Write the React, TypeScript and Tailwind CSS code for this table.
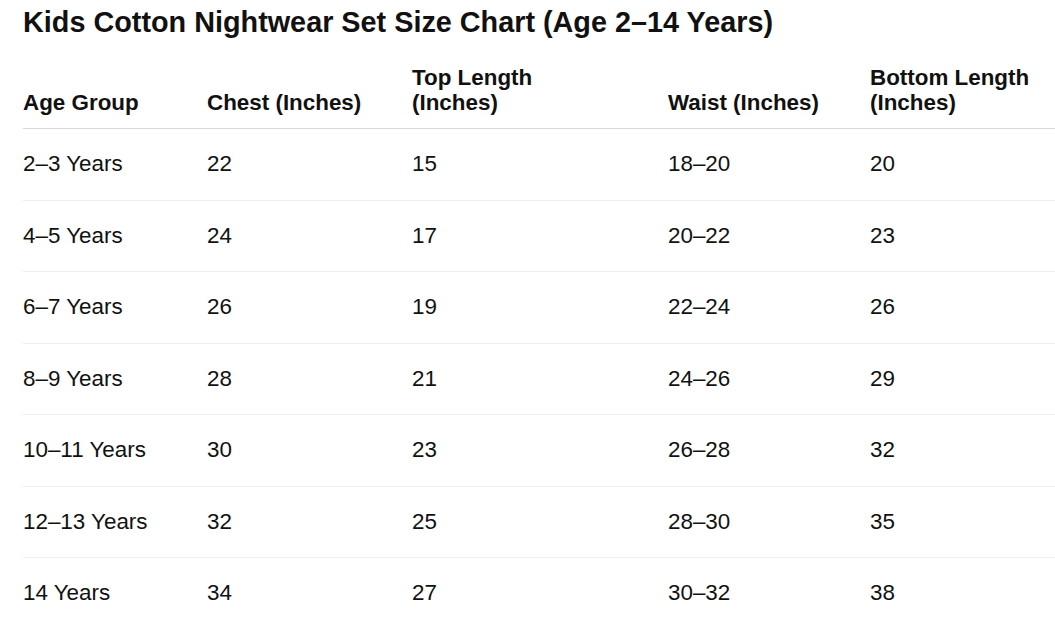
import React from "react";

const rows = [
  ["2–3 Years", "22", "15", "18–20", "20"],
  ["4–5 Years", "24", "17", "20–22", "23"],
  ["6–7 Years", "26", "19", "22–24", "26"],
  ["8–9 Years", "28", "21", "24–26", "29"],
  ["10–11 Years", "30", "23", "26–28", "32"],
  ["12–13 Years", "32", "25", "28–30", "35"],
  ["14 Years", "34", "27", "30–32", "38"],
];

const headers: React.ReactNode[] = [
  "Age Group",
  "Chest (Inches)",
  <>Top Length<br />(Inches)</>,
  "Waist (Inches)",
  <>Bottom Length<br />(Inches)</>,
];

export default function App() {
  return (
    <div className="w-[1055px] h-[622px] overflow-hidden bg-white text-[#111] pl-[23px]" style={{ fontFamily: '"Liberation Sans", Arial, sans-serif' }}>
      <h1 className="text-[28.8px] leading-[32px] font-bold pt-[6px] m-0 whitespace-nowrap">
        Kids Cotton Nightwear Set Size Chart (Age 2–14 Years)
      </h1>
      <table className="mt-[27px] border-collapse text-[22.4px] w-[1100px] table-fixed">
        <colgroup>
          <col className="w-[184px]" />
          <col className="w-[205px]" />
          <col className="w-[256px]" />
          <col className="w-[202px]" />
          <col />
        </colgroup>
        <thead>
          <tr className="border-b border-[#d9d9d9]">
            {headers.map((h, i) => (
              <th key={i} className="text-left align-bottom font-bold leading-[25px] pb-[13px] pr-[20px]">
                {h}
              </th>
            ))}
          </tr>
        </thead>
        <tbody>
          {rows.map((r, i) => (
            <tr key={i} className="border-b border-[#eeeeee]">
              {r.map((c, j) => (
                <td key={j} className="py-[23px] leading-[24.5px] align-middle">
                  {c}
                </td>
              ))}
            </tr>
          ))}
        </tbody>
      </table>
    </div>
  );
}
